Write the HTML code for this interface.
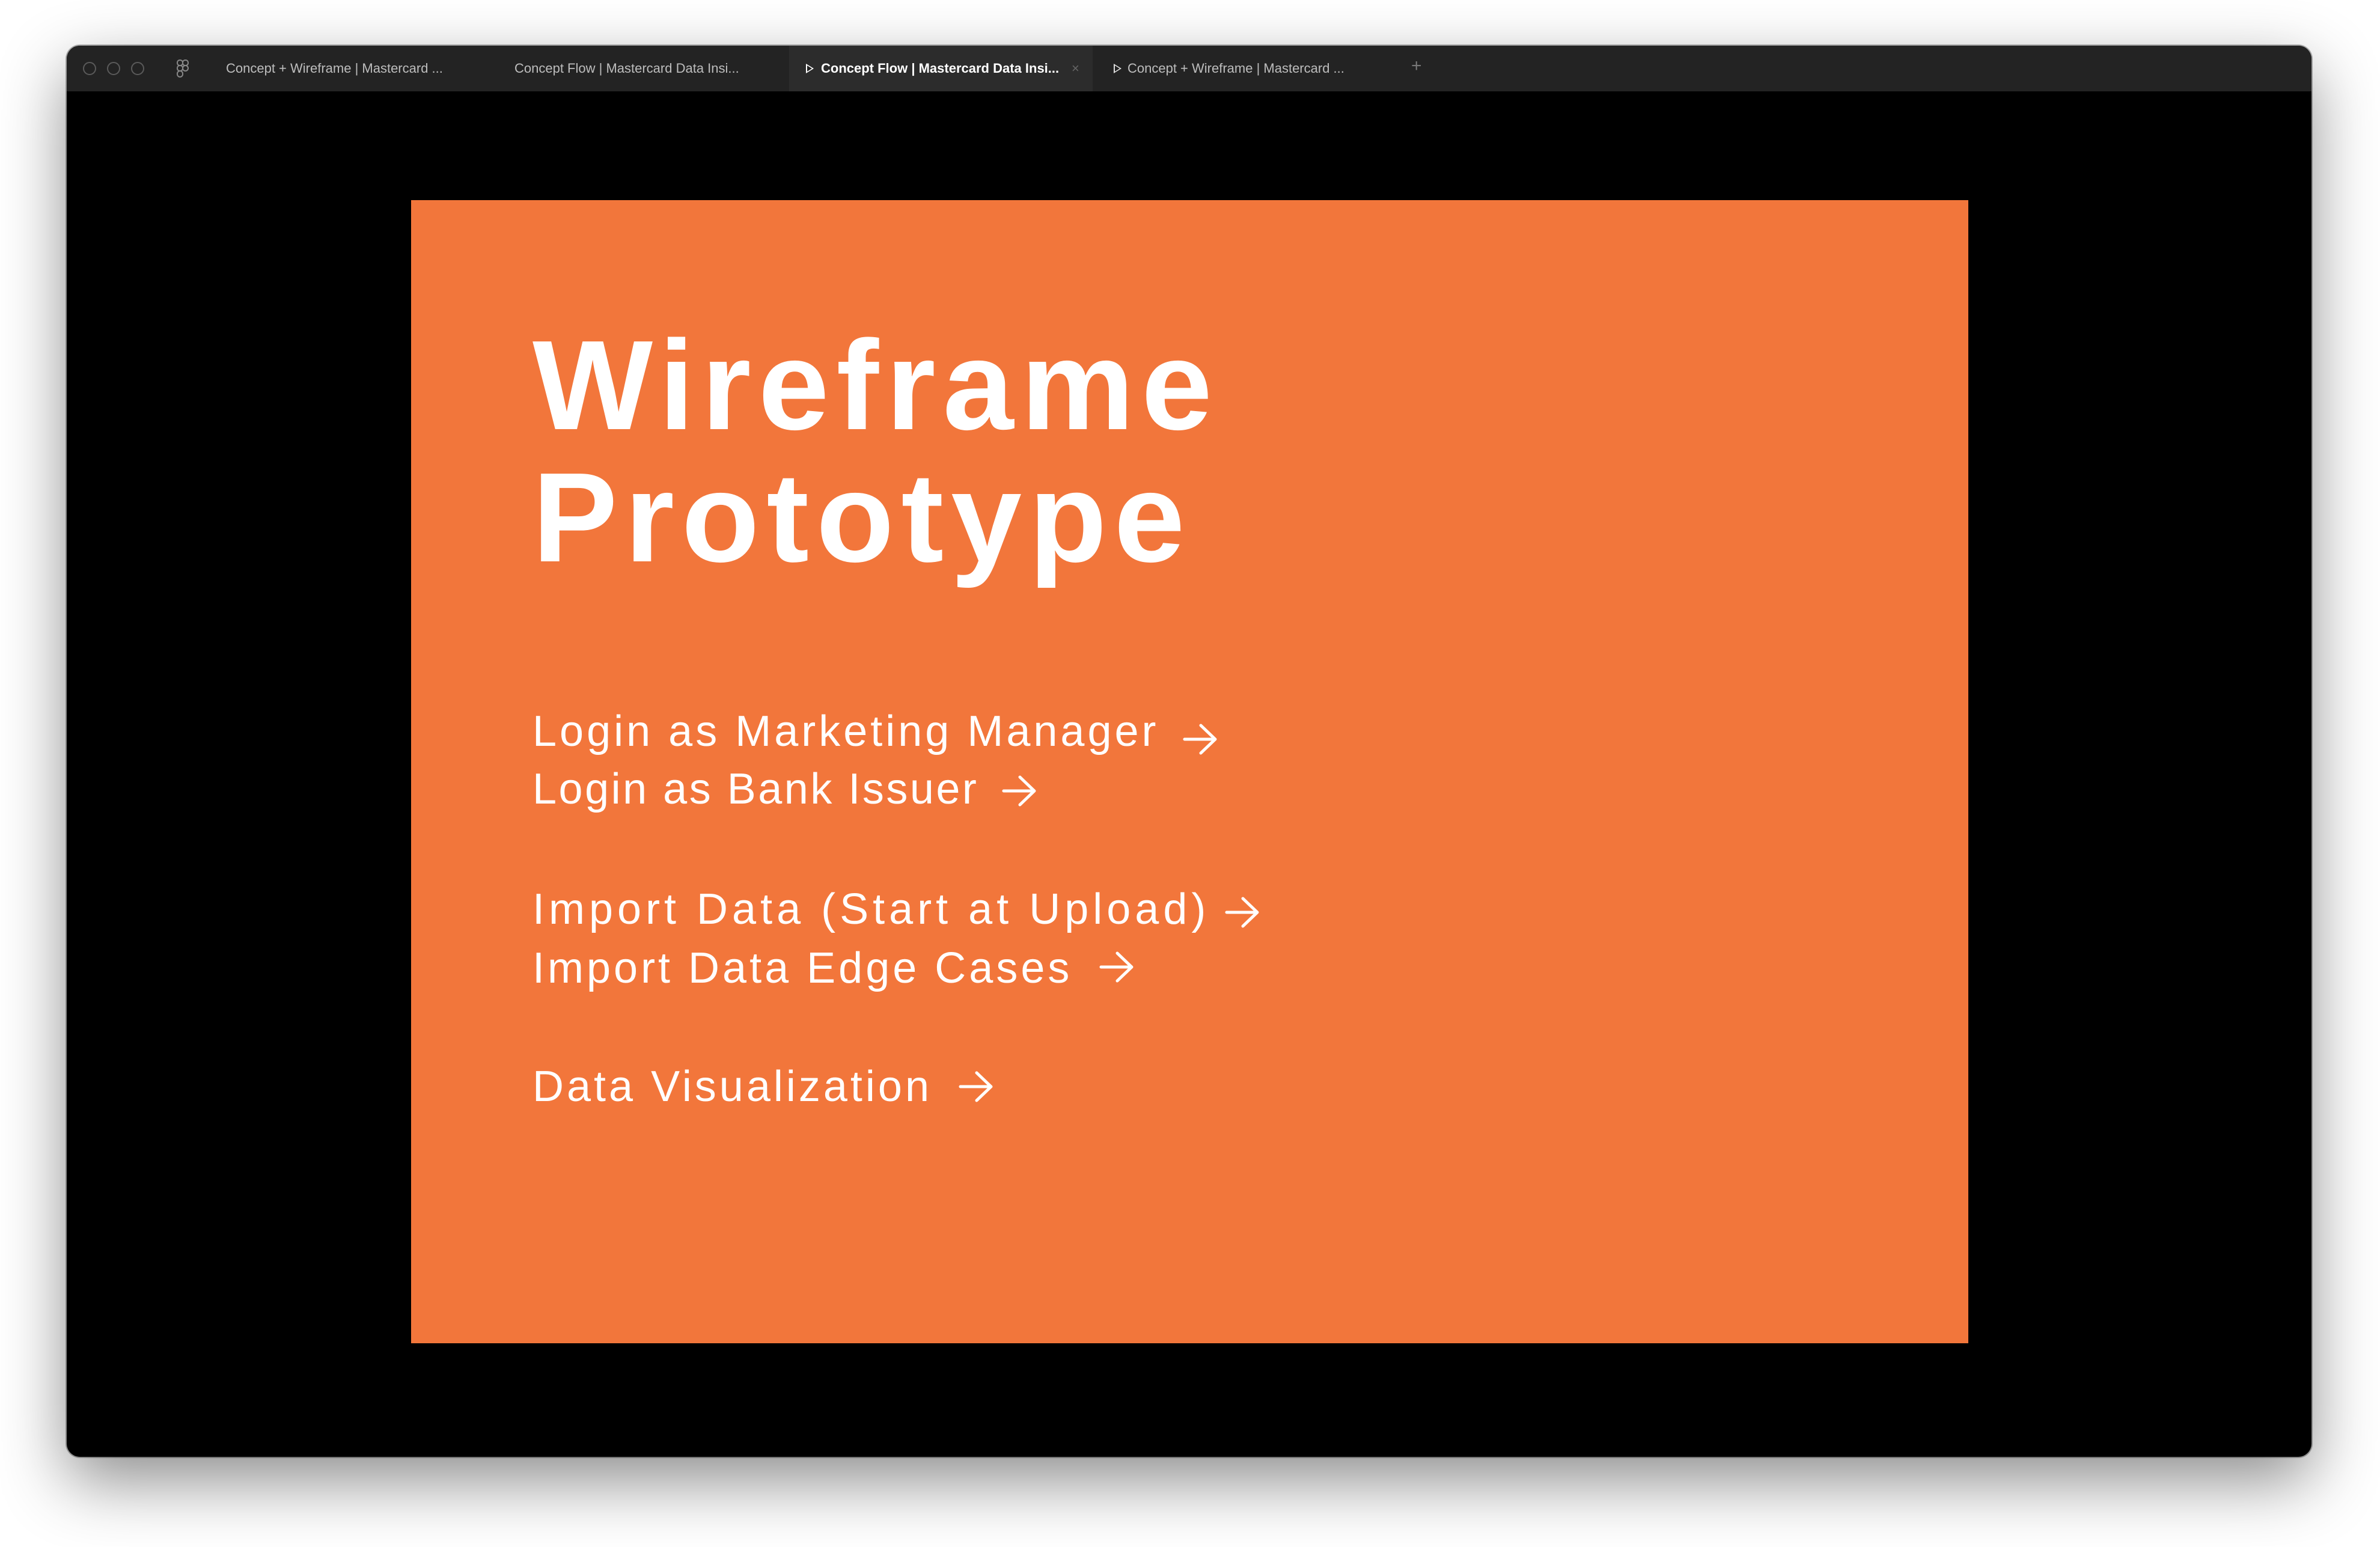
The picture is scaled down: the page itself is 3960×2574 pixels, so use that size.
<!DOCTYPE html>
<html><head><meta charset="utf-8"><style>
*{margin:0;padding:0;box-sizing:border-box}
body{width:3960px;height:2574px;background:#fff;position:relative;overflow:hidden;font-family:"Liberation Sans",sans-serif}
.win{position:absolute;left:111px;top:76px;width:3735px;height:2348px;background:#000;border-radius:22px;overflow:hidden;box-shadow:0 40px 110px rgba(0,0,0,.45),0 0 0 2px rgba(0,0,0,.3)}
.bar{position:absolute;left:0;top:0;width:100%;height:76px;background:#232323}
.dot{position:absolute;top:27px;width:22px;height:22px;border-radius:50%;border:2px solid #5a5a5a}
.t{position:absolute;top:24px;font-size:22px;color:#bdbdbd;white-space:nowrap;line-height:28px}
.act{position:absolute;left:1202px;top:0;width:505px;height:76px;background:#2c2c2c}
.tri{position:absolute;top:30px;width:0;height:0;border-left:13px solid #ddd;border-top:8px solid transparent;border-bottom:8px solid transparent}
.tri:after{content:"";position:absolute;left:-11px;top:-5px;border-left:8px solid #232323;border-top:5px solid transparent;border-bottom:5px solid transparent}
.slide{position:absolute;left:573px;top:257px;width:2591px;height:1902px;background:#f2763b}
h1{position:absolute;left:202px;font-weight:bold;font-size:212px;color:#fff;letter-spacing:12px;line-height:1;white-space:nowrap}
.l{position:absolute;left:202px;font-size:72px;color:#fff;letter-spacing:5px;line-height:1;white-space:nowrap}
.ar{position:absolute;width:58px;height:52px}
</style></head><body>
<div class="win">
 <div class="bar">
  <div class="dot" style="left:27px"></div><div class="dot" style="left:67px"></div><div class="dot" style="left:107px"></div>
  <svg style="position:absolute;left:182px;top:22px" width="22" height="34" viewBox="0 0 22 34" fill="none" stroke="#888" stroke-width="2"><rect x="2" y="2" width="9" height="9" rx="4"/><rect x="11" y="2" width="9" height="9" rx="4"/><rect x="2" y="11" width="9" height="9" rx="4"/><circle cx="15.5" cy="15.5" r="4.5"/><rect x="2" y="20" width="9" height="10" rx="4.5"/></svg>
  <div class="t" style="left:265px">Concept + Wireframe | Mastercard ...</div>
  <div class="t" style="left:745px">Concept Flow | Mastercard Data Insi...</div>
  <div class="act"></div>
  <div class="tri" style="left:1230px;border-left-color:#fff"></div>
  <div class="t" style="left:1255px;color:#fff;font-weight:bold">Concept Flow | Mastercard Data Insi...</div>
  <div class="t" style="left:1672px;color:#666">×</div>
  <div class="tri" style="left:1742px"></div>
  <div class="t" style="left:1765px">Concept + Wireframe | Mastercard ...</div>
  <div class="t" style="left:2237px;color:#777;font-size:30px;top:20px">+</div>
 </div>
 <div class="slide">
  <h1 style="top:202px">Wireframe</h1>
  <h1 style="top:422px">Prototype</h1>
  <div class="l" style="top:848px">Login as Marketing Manager</div>
  <div class="l" style="top:944px;letter-spacing:3.5px">Login as Bank Issuer</div>
  <div class="l" style="top:1144px;letter-spacing:7px">Import Data (Start at Upload)</div>
  <div class="l" style="top:1242px">Import Data Edge Cases</div>
  <div class="l" style="top:1439px">Data Visualization</div>
  <svg class="ar" style="left:1284px;top:871px" viewBox="0 0 58 52" fill="none" stroke="#fff" stroke-width="5" stroke-linecap="round" stroke-linejoin="round"><path d="M3 26H54M30 3L54 26L30 49"/></svg>
  <svg class="ar" style="left:983px;top:957px" viewBox="0 0 58 52" fill="none" stroke="#fff" stroke-width="5" stroke-linecap="round" stroke-linejoin="round"><path d="M3 26H54M30 3L54 26L30 49"/></svg>
  <svg class="ar" style="left:1354px;top:1159px" viewBox="0 0 58 52" fill="none" stroke="#fff" stroke-width="5" stroke-linecap="round" stroke-linejoin="round"><path d="M3 26H54M30 3L54 26L30 49"/></svg>
  <svg class="ar" style="left:1145px;top:1250px" viewBox="0 0 58 52" fill="none" stroke="#fff" stroke-width="5" stroke-linecap="round" stroke-linejoin="round"><path d="M3 26H54M30 3L54 26L30 49"/></svg>
  <svg class="ar" style="left:911px;top:1449px" viewBox="0 0 58 52" fill="none" stroke="#fff" stroke-width="5" stroke-linecap="round" stroke-linejoin="round"><path d="M3 26H54M30 3L54 26L30 49"/></svg>
 </div>
</div>
</body></html>
